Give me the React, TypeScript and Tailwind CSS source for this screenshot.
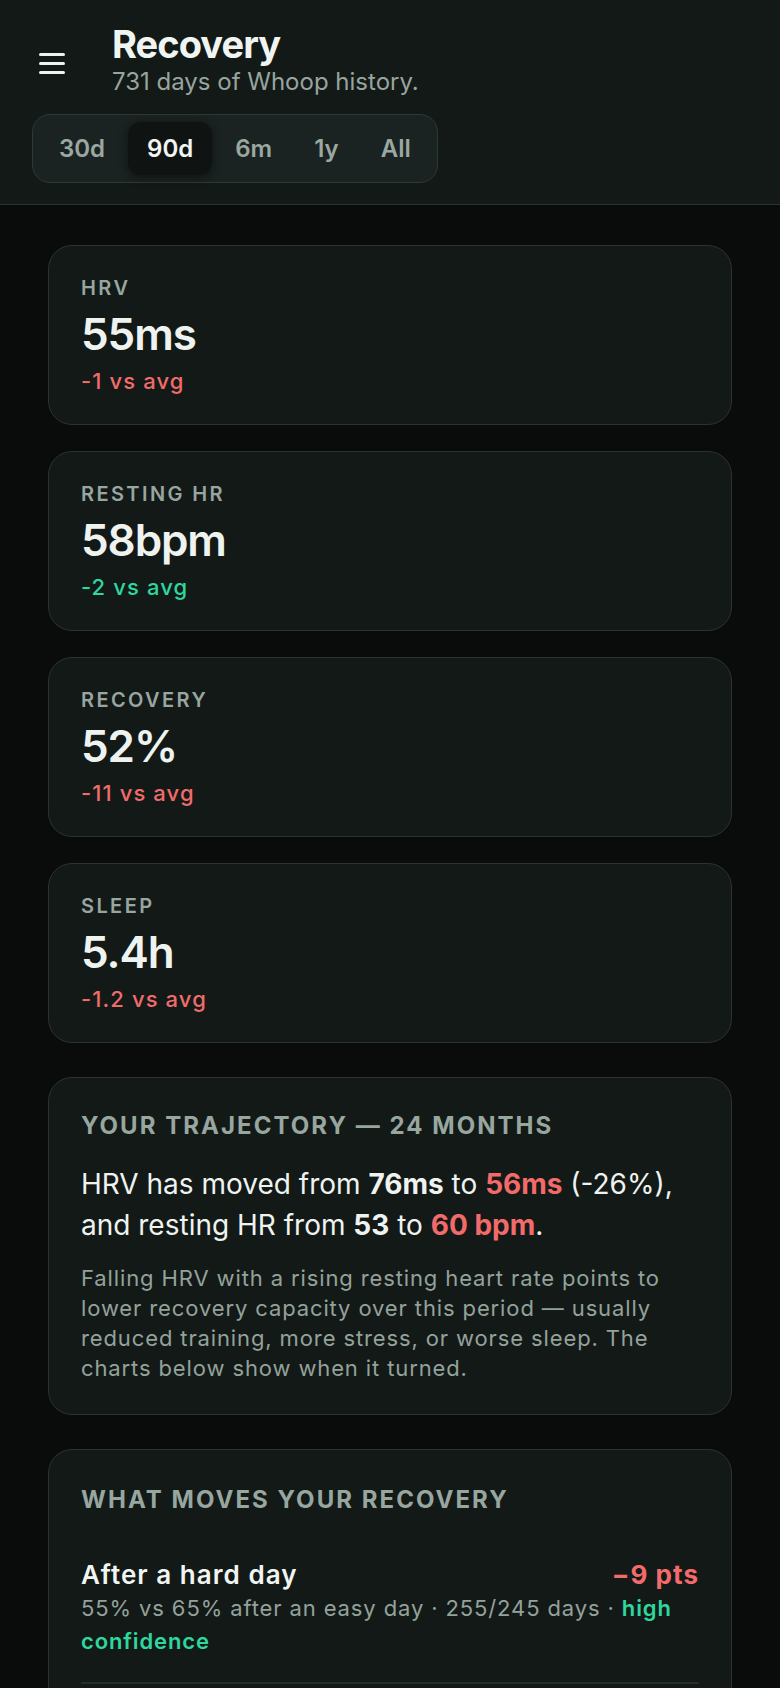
import React from 'react';

const ranges = ['30d', '90d', '6m', '1y', 'All'];

const stats = [
  { label: 'HRV', value: '55ms', delta: '-1 vs avg', good: false },
  { label: 'Resting HR', value: '58bpm', delta: '-2 vs avg', good: true },
  { label: 'Recovery', value: '52%', delta: '-11 vs avg', good: false },
  { label: 'Sleep', value: '5.4h', delta: '-1.2 vs avg', good: false },
];

function StatCard({ label, value, delta, good }: { label: string; value: string; delta: string; good: boolean }) {
  return (
    <div className="rounded-[24px] border border-[#2b3331] bg-[#131917] px-8 py-[28px]">
      <div className="text-[20px] leading-[28px] font-semibold uppercase tracking-[0.12em] text-[#97a69f]">{label}</div>
      <div className="mt-[8px] text-[44px] leading-[48px] font-semibold tracking-tight text-[#eef3f0]">{value}</div>
      <div
        className={`mt-[8px] text-[22px] leading-[30px] font-medium tracking-[0.05em] ${
          good ? 'text-[#2fd69e]' : 'text-[#f26b6b]'
        }`}
      >
        {delta}
      </div>
    </div>
  );
}

export default function App() {
  return (
    <div className="min-h-screen bg-[#0a0c0c] font-['Inter','Noto_Sans',sans-serif] text-[#eef3f0]">
      {/* Header */}
      <header className="bg-[#131917] border-b border-[#2c3432] px-8 pt-[22px] pb-[21px]">
        <div className="flex items-center gap-10">
          <button className="mt-[6px] flex h-10 w-10 flex-col items-center justify-center gap-[6px]">
            <span className="block h-[3px] w-[26px] rounded-sm bg-[#eef3f0]" />
            <span className="block h-[3px] w-[26px] rounded-sm bg-[#eef3f0]" />
            <span className="block h-[3px] w-[26px] rounded-sm bg-[#eef3f0]" />
          </button>
          <div>
            <h1 className="text-[38px] leading-[44px] font-bold tracking-tight text-[#f1f5f2]">Recovery</h1>
            <p className="text-[24px] leading-[32px] text-[#97a59e]">731 days of Whoop history.</p>
          </div>
        </div>

        <div className="mt-4 inline-flex gap-1 rounded-[18px] border border-[#2e3835] bg-[#1a2321] p-[7px]">
          {ranges.map((r) => (
            <button
              key={r}
              className={`h-[53px] rounded-[13px] px-[19px] text-[24px] font-semibold ${
                r === '90d'
                  ? 'bg-[#0f1412] text-[#f2f5f3] shadow-[0_2px_10px_rgba(0,0,0,0.5)]'
                  : 'text-[#9aa8a1]'
              }`}
            >
              {r}
            </button>
          ))}
        </div>
      </header>

      <main className="px-[48px] pt-10 pb-10">
        {/* Stat cards */}
        <div className="flex flex-col gap-[26px]">
          {stats.map((s) => (
            <StatCard key={s.label} {...s} />
          ))}
        </div>

        {/* Trajectory */}
        <section className="mt-[34px] rounded-[24px] border border-[#2b3331] bg-[#131917] px-8 pt-8 pb-[31px]">
          <h2 className="text-[24px] leading-[32px] font-bold uppercase tracking-[0.085em] text-[#97a69f]">
            Your trajectory — 24 months
          </h2>
          <p className="mt-[22px] text-[28px] leading-[41px] text-[#eef3f0]">
            HRV has moved from <span className="font-bold">76ms</span> to{' '}
            <span className="font-bold text-[#f26b6b]">56ms</span> (-26%), and resting HR from{' '}
            <span className="font-bold">53</span> to <span className="font-bold text-[#f26b6b]">60 bpm</span>.
          </p>
          <p className="mt-[17px] text-[22px] leading-[30px] tracking-[0.04em] text-[#93a29b]">
            Falling HRV with a rising resting heart rate points to lower recovery capacity over this period — usually
            reduced training, more stress, or worse sleep. The charts below show when it turned.
          </p>
        </section>

        {/* What moves your recovery */}
        <section className="mt-[34px] rounded-[24px] border border-[#2b3331] bg-[#131917] px-8 pt-[34px] pb-8">
          <h2 className="text-[24px] leading-[32px] font-bold uppercase tracking-[0.085em] text-[#97a69f]">
            What moves your recovery
          </h2>
          <div className="mt-[42px] border-b-2 border-[#262e2c] pb-[24px]">
            <div className="flex items-baseline justify-between">
              <span className="text-[26px] leading-[34px] font-semibold tracking-[0.04em] text-[#f1f5f2]">
                After a hard day
              </span>
              <span className="text-[26px] leading-[34px] font-bold tracking-[0.04em] text-[#f26b6b]">−9 pts</span>
            </div>
            <p className="text-[22px] leading-[33px] tracking-[0.04em] text-[#93a29b]">
              55% vs 65% after an easy day · 255/245 days ·{' '}
              <span className="font-semibold text-[#2fd69e]">high confidence</span>
            </p>
          </div>
        </section>
      </main>
    </div>
  );
}
